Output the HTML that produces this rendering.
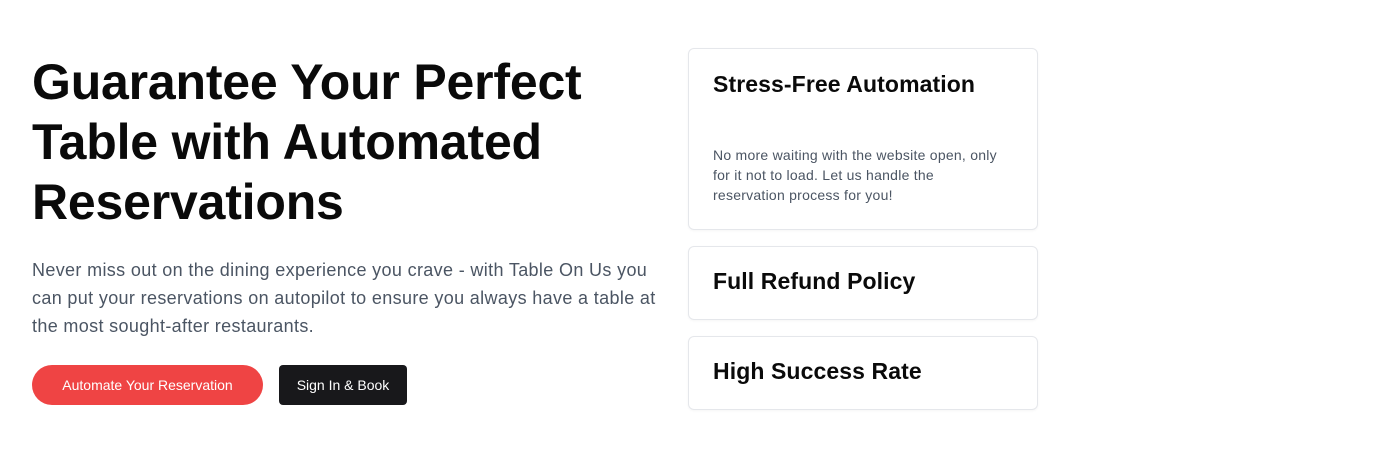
<!DOCTYPE html>
<html><head><style>
*{margin:0;padding:0;box-sizing:border-box}
body{width:1376px;height:458px;background:#fff;font-family:"Liberation Sans",sans-serif;position:relative;overflow:hidden}
h1{position:absolute;left:32px;top:52px;width:660px;font-size:50px;line-height:60px;font-weight:700;color:#0a0a0a;letter-spacing:-0.2px}
p.lead{position:absolute;left:32px;top:256px;width:645px;font-size:18px;line-height:28px;color:#4b5563;letter-spacing:0.35px}
.btn{position:absolute;top:365px;height:40px;line-height:40px;font-size:14px;color:#fff;text-align:center}
.b1{left:32px;width:231px;background:#ef4444;border-radius:20px}
.b2{left:279px;width:128px;background:#18181b;border-radius:4px}
.card{position:absolute;left:688px;width:350px;border:1px solid #e5e7eb;border-radius:6px;box-shadow:0 1px 2px rgba(0,0,0,.04)}
.card h3{position:absolute;left:24px;font-size:23px;font-weight:700;color:#0a0a0a;letter-spacing:0.1px}
.card p{position:absolute;left:24px;top:96px;width:290px;font-size:14px;line-height:20px;color:#4b5563;letter-spacing:0.25px}
</style></head><body>
<h1>Guarantee Your Perfect Table with Automated Reservations</h1>
<p class="lead">Never miss out on the dining experience you crave - with Table On Us you can put your reservations on autopilot to ensure you always have a table at the most sought-after restaurants.</p>
<div class="btn b1">Automate Your Reservation</div>
<div class="btn b2">Sign In &amp; Book</div>
<div class="card" style="top:48px;height:182px"><h3 style="top:22px">Stress-Free Automation</h3><p>No more waiting with the website open, only for it not to load. Let us handle the reservation process for you!</p></div>
<div class="card" style="top:246px;height:74px"><h3 style="top:21px">Full Refund Policy</h3></div>
<div class="card" style="top:336px;height:74px"><h3 style="top:21px">High Success Rate</h3></div>
</body></html>
